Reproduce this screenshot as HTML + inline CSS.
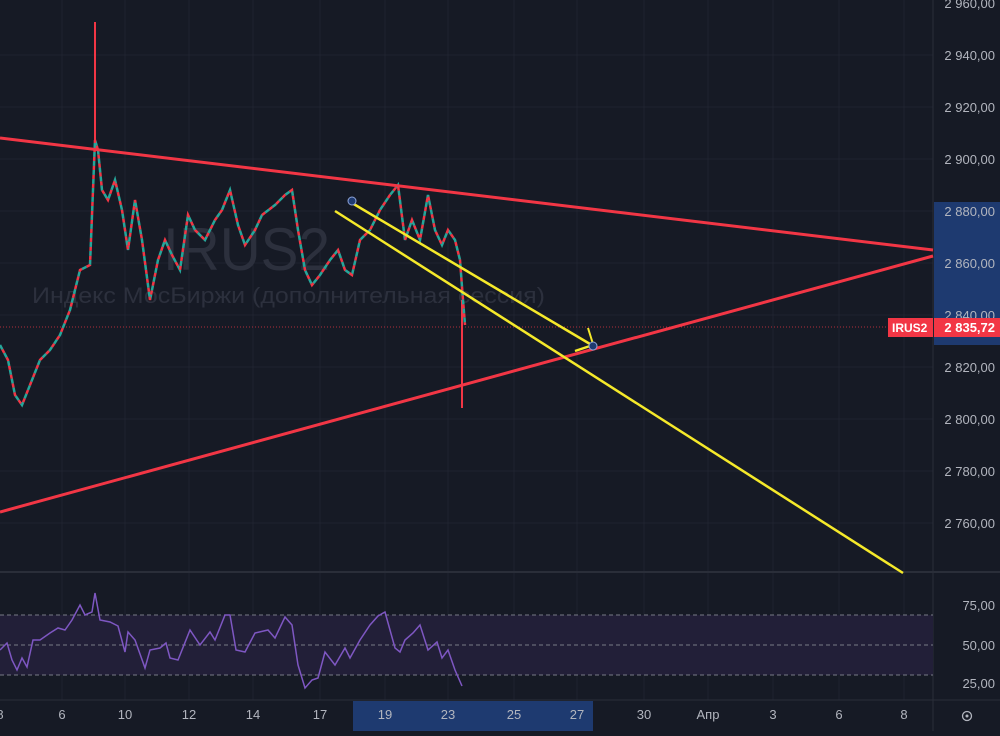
<!DOCTYPE html>
<html><head><meta charset="utf-8"><style>
html,body{margin:0;padding:0;background:#161a25;}
body{width:1000px;height:731px;overflow:hidden;font-family:"Liberation Sans","Noto Sans CJK SC",sans-serif;}
</style></head><body>
<svg width="1000" height="731" xmlns="http://www.w3.org/2000/svg" font-family="Liberation Sans, DejaVu Sans, sans-serif">
<rect width="1000" height="731" fill="#161a25"/>
<!-- grid -->
<g stroke="#1f2330" stroke-width="1">
<line x1="62" y1="0" x2="62" y2="700"/><line x1="125" y1="0" x2="125" y2="700"/><line x1="189" y1="0" x2="189" y2="700"/><line x1="253" y1="0" x2="253" y2="700"/><line x1="320" y1="0" x2="320" y2="700"/><line x1="385" y1="0" x2="385" y2="700"/><line x1="448" y1="0" x2="448" y2="700"/><line x1="514" y1="0" x2="514" y2="700"/><line x1="577" y1="0" x2="577" y2="700"/><line x1="644" y1="0" x2="644" y2="700"/><line x1="708" y1="0" x2="708" y2="700"/><line x1="773" y1="0" x2="773" y2="700"/><line x1="839" y1="0" x2="839" y2="700"/><line x1="904" y1="0" x2="904" y2="700"/>
<line x1="0" y1="55" x2="933" y2="55"/><line x1="0" y1="107" x2="933" y2="107"/><line x1="0" y1="159" x2="933" y2="159"/><line x1="0" y1="211" x2="933" y2="211"/><line x1="0" y1="263" x2="933" y2="263"/><line x1="0" y1="315" x2="933" y2="315"/><line x1="0" y1="367" x2="933" y2="367"/><line x1="0" y1="419" x2="933" y2="419"/><line x1="0" y1="471" x2="933" y2="471"/><line x1="0" y1="523" x2="933" y2="523"/>
</g>
<line x1="933" y1="0" x2="933" y2="731" stroke="#2a2e39"/>
<line x1="0" y1="572" x2="1000" y2="572" stroke="#2a2e39" stroke-width="2"/>
<line x1="0" y1="700" x2="1000" y2="700" stroke="#2a2e39"/>
<!-- watermark -->
<text x="163" y="270" font-size="60" fill="#2c303d" textLength="167" lengthAdjust="spacingAndGlyphs">IRUS2</text>
<text x="32" y="303" font-size="22" fill="#2c303d" textLength="513" lengthAdjust="spacingAndGlyphs">Индекс МосБиржи (дополнительная сессия)</text>
<!-- price line -->
<line x1="0" y1="327" x2="933" y2="327" stroke="#f23645" stroke-dasharray="1,2" stroke-width="1" opacity="0.7"/>
<!-- candles approx -->
<line x1="95" y1="22" x2="95" y2="150" stroke="#f23645" stroke-width="2"/>
<line x1="462" y1="300" x2="462" y2="408" stroke="#f23645" stroke-width="2"/>
<polyline fill="none" stroke="#26a69a" stroke-width="2.5" stroke-dasharray="5,4" points="0,345 8,360 15,395 22,405 30,385 40,360 50,350 60,335 70,310 80,270 90,265 95,140 98,150 102,190 108,200 115,180 122,210 128,250 135,200 142,240 150,300 158,260 165,240 172,255 180,270 188,215 195,230 205,240 215,220 222,210 230,190 238,225 245,245 255,230 262,215 275,205 285,195 292,190 298,230 305,270 312,285 320,275 330,260 338,250 345,270 352,275 360,240 370,230 380,210 390,195 398,185 405,240 412,220 420,240 428,195 435,230 442,245 448,230 455,240 460,260 463,300 465,325"/>
<polyline fill="none" stroke="#f23645" stroke-width="2.5" stroke-dasharray="4,5" stroke-dashoffset="4" points="0,345 8,360 15,395 22,405 30,385 40,360 50,350 60,335 70,310 80,270 90,265 95,140 98,150 102,190 108,200 115,180 122,210 128,250 135,200 142,240 150,300 158,260 165,240 172,255 180,270 188,215 195,230 205,240 215,220 222,210 230,190 238,225 245,245 255,230 262,215 275,205 285,195 292,190 298,230 305,270 312,285 320,275 330,260 338,250 345,270 352,275 360,240 370,230 380,210 390,195 398,185 405,240 412,220 420,240 428,195 435,230 442,245 448,230 455,240 460,260 463,300 465,325"/>
<!-- trend lines -->
<line x1="0" y1="138" x2="933" y2="250" stroke="#f23645" stroke-width="3"/>
<line x1="0" y1="512" x2="933" y2="256" stroke="#f23645" stroke-width="3"/>
<line x1="352" y1="203" x2="590" y2="344" stroke="#f5e92a" stroke-width="2.5"/>
<line x1="335" y1="211" x2="903" y2="573" stroke="#f5e92a" stroke-width="2.5"/>
<line x1="588" y1="328" x2="593" y2="344" stroke="#f5e92a" stroke-width="2"/>
<line x1="575" y1="351" x2="590" y2="346" stroke="#f5e92a" stroke-width="2.5"/>
<circle cx="352" cy="201" r="4" fill="#1e3a70" stroke="#8fa4d8" stroke-width="1"/>
<circle cx="593" cy="346" r="4" fill="#1e3a70" stroke="#8fa4d8" stroke-width="1"/>
<!-- price axis -->
<rect x="934" y="202" width="66" height="143" fill="#1e3a70"/>
<g font-size="13" fill="#b2b5be" text-anchor="end">
<text x="995" y="8">2 960,00</text><text x="995" y="60">2 940,00</text><text x="995" y="112">2 920,00</text><text x="995" y="164">2 900,00</text><text x="995" y="216">2 880,00</text><text x="995" y="268">2 860,00</text><text x="995" y="320">2 840,00</text><text x="995" y="372">2 820,00</text><text x="995" y="424">2 800,00</text><text x="995" y="476">2 780,00</text><text x="995" y="528">2 760,00</text>
<text x="995" y="610">75,00</text><text x="995" y="650">50,00</text><text x="995" y="688">25,00</text>
</g>
<rect x="888" y="318" width="45" height="19" fill="#f23645"/>
<text x="892" y="332" font-size="12" font-weight="bold" fill="#fff">IRUS2</text>
<rect x="934" y="318" width="66" height="19" fill="#f23645"/>
<text x="995" y="332" font-size="13" font-weight="bold" fill="#fff" text-anchor="end">2 835,72</text>
<!-- RSI -->
<rect x="0" y="615" width="933" height="60" fill="#221f38"/>
<g stroke="#787b86" stroke-dasharray="4,3" stroke-width="1">
<line x1="0" y1="615" x2="933" y2="615"/><line x1="0" y1="645" x2="933" y2="645"/><line x1="0" y1="675" x2="933" y2="675"/>
</g>
<polyline fill="none" stroke="#7e57c2" stroke-width="1.5" points="0,650 7,643 12,660 17,670 22,658 27,667 33,640 40,640 50,633 58,628 65,630 72,620 80,605 85,615 92,612 95,593 100,620 110,622 118,626 125,652 128,632 135,640 145,668 150,650 160,648 166,643 170,658 178,660 190,630 200,645 210,632 215,640 225,615 230,615 236,650 245,652 255,633 268,630 275,638 285,617 292,625 298,665 305,688 312,680 318,678 325,652 335,665 345,648 350,658 360,640 370,625 378,616 385,612 390,630 395,648 400,652 405,640 413,633 420,625 428,650 437,642 442,658 448,650 455,670 462,686"/>
<!-- time axis -->
<rect x="353" y="701" width="240" height="30" fill="#1e3a70"/>
<g font-size="13" fill="#b2b5be" text-anchor="middle">
<text x="0" y="719">8</text><text x="62" y="719">6</text><text x="125" y="719">10</text><text x="189" y="719">12</text><text x="253" y="719">14</text><text x="320" y="719">17</text><text x="385" y="719">19</text><text x="448" y="719">23</text><text x="514" y="719">25</text><text x="577" y="719">27</text><text x="644" y="719">30</text><text x="708" y="719">Апр</text><text x="773" y="719">3</text><text x="839" y="719">6</text><text x="904" y="719">8</text>
</g>
<circle cx="967" cy="716" r="4.5" fill="none" stroke="#b2b5be" stroke-width="1.3"/>
<circle cx="967" cy="716" r="1.5" fill="#b2b5be"/>
</svg>
</body></html>
